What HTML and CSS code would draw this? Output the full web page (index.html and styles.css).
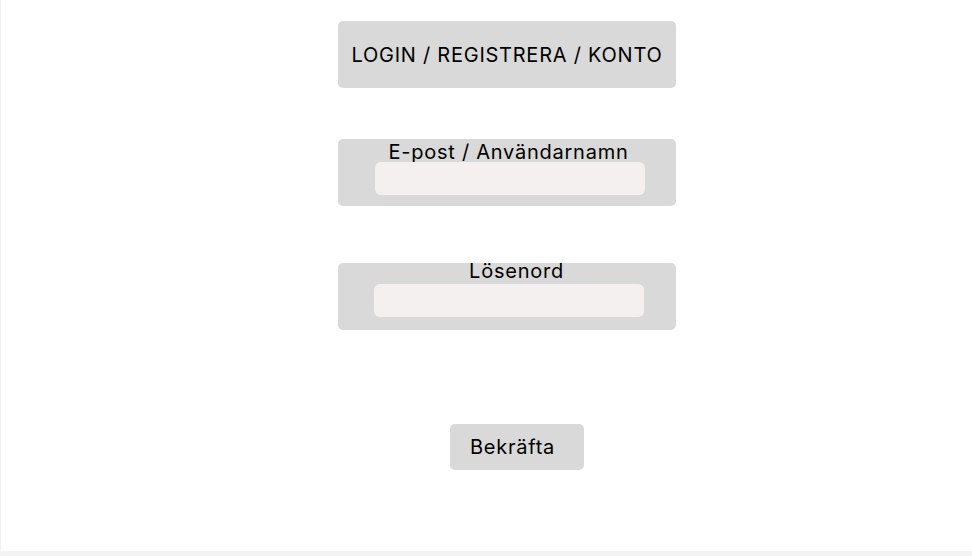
FILE: index.html
```html
<!DOCTYPE html>
<html lang="sv">
<head>
<meta charset="utf-8">
<title>Login</title>
<link rel="stylesheet" href="styles.css">
</head>
<body>
<div class="frame">
  <div class="box title-box">LOGIN / REGISTRERA / KONTO</div>
  <div class="box field field-user">
    <div class="label label-user">E-post / Användarnamn</div>
    <div class="input input-user"></div>
  </div>
  <div class="box field field-pass">
    <div class="label label-pass">Lösenord</div>
    <div class="input input-pass"></div>
  </div>
  <div class="confirm">Bekräfta</div>
</div>
</body>
</html>
```
FILE: styles.css
```css
html, body {
  margin: 0;
  padding: 0;
}
body {
  background: #f3f3f3;
  font-family: Inter, "Liberation Sans", sans-serif;
  color: #000;
  letter-spacing: 0.75px;
}
.frame {
  margin-left: 1px;
  height: 551px;
  background: #fff;
  display: flex;
  flex-direction: column;
  align-items: flex-start;
  padding-left: 337px;
  box-sizing: border-box;
  overflow: hidden;
}
.box {
  width: 338px;
  height: 67px;
  background: #d9d9d9;
  border-radius: 5px;
  box-sizing: border-box;
}
.title-box {
  margin-top: 21px;
  display: flex;
  align-items: center;
  justify-content: center;
  font-size: 20px;
  line-height: 20px;
}
.field {
  display: flex;
  flex-direction: column;
  align-items: flex-start;
}
.label {
  width: 100%;
  box-sizing: border-box;
  text-align: center;
  font-size: 20px;
  line-height: 20px;
  white-space: nowrap;
}
.input {
  width: 270px;
  height: 33px;
  background: #f5f0f0;
  border-radius: 6px;
}
.field-user {
  margin-top: 51px;
  padding-top: 3px;
}
.label-user {
  padding-left: 3px;
}
.input-user {
  margin-left: 37px;
}
.field-pass {
  margin-top: 57px;
}
.label-pass {
  margin-top: -2px;
  padding-left: 19px;
}
.input-pass {
  margin-top: 3px;
  margin-left: 36px;
}
.confirm {
  margin-top: 94px;
  margin-left: 112px;
  width: 134px;
  height: 46px;
  background: #d9d9d9;
  border-radius: 5px;
  box-sizing: border-box;
  padding-left: 20px;
  display: flex;
  align-items: center;
  font-size: 20px;
  line-height: 20px;
}
```
